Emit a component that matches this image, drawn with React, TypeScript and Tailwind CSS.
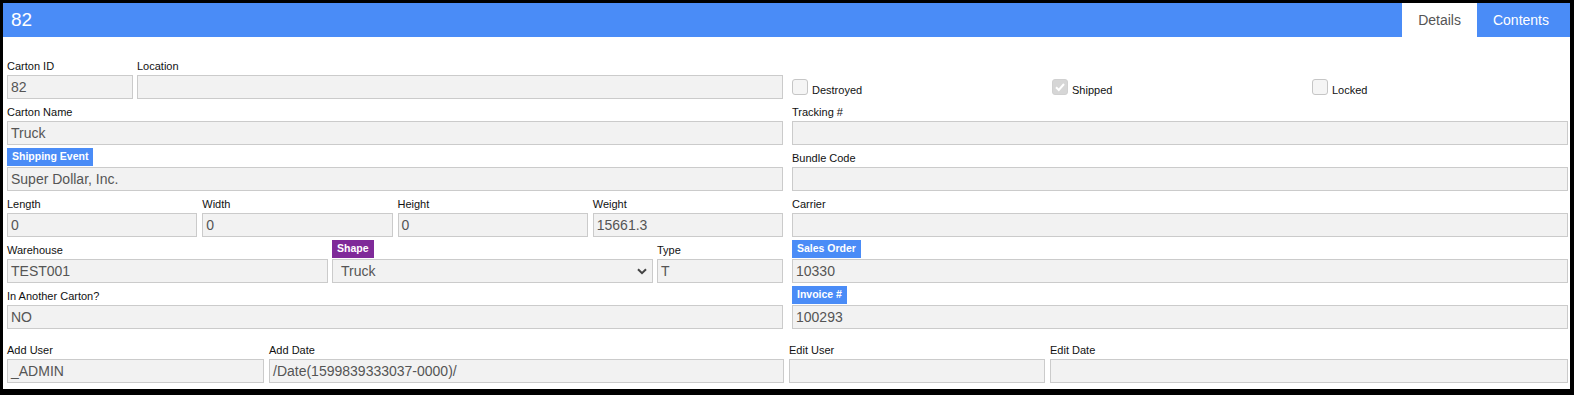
import React from "react";

const font = { fontFamily: '"Liberation Sans", Arial, sans-serif' };

function Label({ text }: { text: string }) {
  return (
    <div className="h-[20px] flex items-end pb-[2px]">
      <span className="text-[11px] leading-[13px] text-[#111]">{text}</span>
    </div>
  );
}

function Badge({ text, purple }: { text: string; purple?: boolean }) {
  return (
    <div className="h-[20px] flex items-end pb-[1px]">
      <span
        className={
          "h-[18px] px-[5px] flex items-center text-[10.5px] font-bold text-white " +
          (purple ? "bg-[#7f2a99]" : "bg-[#4a8cf7]")
        }
      >
        {text}
      </span>
    </div>
  );
}

function Input({ value = "" }: { value?: string }) {
  return (
    <div className="h-[24px] border border-[#cbcbcb] bg-[#f2f2f2] px-[3px] flex items-center text-[14px] text-[#555] whitespace-nowrap overflow-hidden">
      {value}
    </div>
  );
}

function Field({
  label,
  value,
  badge,
}: {
  label: string;
  value?: string;
  badge?: "blue" | "purple";
}) {
  return (
    <div className="flex flex-col min-w-0">
      {badge ? <Badge text={label} purple={badge === "purple"} /> : <Label text={label} />}
      <Input value={value} />
    </div>
  );
}

function Check({ label, checked }: { label: string; checked?: boolean }) {
  return (
    <div className="flex items-end gap-[4px]">
      <div
        className={
          "w-[16px] h-[16px] rounded-[3px] border flex items-center justify-center " +
          (checked ? "bg-[#d6d6d6] border-[#d0d0d0]" : "bg-[#f5f5f5] border-[#c6c6c6]")
        }
      >
        {checked && (
          <svg width="12" height="12" viewBox="0 0 12 12">
            <path d="M2 6.2 L4.8 9 L10 3" fill="none" stroke="#fff" strokeWidth="2" />
          </svg>
        )}
      </div>
      <span className="text-[11px] leading-[11px] text-[#111] mb-[-1px]">{label}</span>
    </div>
  );
}

export default function App() {
  return (
    <div className="w-[1574px] h-[395px] bg-black pt-[3px] pl-[3px]" style={font}>
      <div className="w-[1567px] h-[386px] bg-white flex flex-col">
        <div className="h-[34px] bg-[#4a8cf7] flex items-stretch justify-between pr-[5px]">
          <div className="pl-[8px] flex items-center text-white text-[19px]">82</div>
          <div className="flex items-stretch text-[14px]">
            <div className="bg-white text-[#555] px-[16px] flex items-center">Details</div>
            <div className="text-white px-[16px] flex items-center">Contents</div>
          </div>
        </div>

        <div className="pl-[4px] pr-[2px] pt-[18px] flex flex-col gap-[2px]">
          {/* Row 1 */}
          <div className="grid grid-cols-2 gap-[9px]">
            <div className="grid grid-cols-[126px_1fr] gap-[4px]">
              <Field label="Carton ID" value="82" />
              <Field label="Location" />
            </div>
            <div className="h-[44px] pt-[24px] grid grid-cols-[260px_260px_1fr] items-start">
              <Check label="Destroyed" />
              <Check label="Shipped" checked />
              <Check label="Locked" />
            </div>
          </div>

          {/* Row 2 */}
          <div className="grid grid-cols-2 gap-[9px]">
            <Field label="Carton Name" value="Truck" />
            <Field label="Tracking #" />
          </div>

          {/* Row 3 */}
          <div className="grid grid-cols-2 gap-[9px]">
            <Field label="Shipping Event" value="Super Dollar, Inc." badge="blue" />
            <Field label="Bundle Code" />
          </div>

          {/* Row 4 */}
          <div className="grid grid-cols-2 gap-[9px]">
            <div className="grid grid-cols-4 gap-[5px]">
              <Field label="Length" value="0" />
              <Field label="Width" value="0" />
              <Field label="Height" value="0" />
              <Field label="Weight" value="15661.3" />
            </div>
            <Field label="Carrier" />
          </div>

          {/* Row 5 */}
          <div className="grid grid-cols-2 gap-[9px]">
            <div className="grid grid-cols-[1fr_1fr_126px] gap-[4px]">
              <Field label="Warehouse" value="TEST001" />
              <div className="flex flex-col min-w-0">
                <Badge text="Shape" purple />
                <div className="relative h-[24px] border border-[#cbcbcb] bg-[#f2f2f2] pl-[8px] flex items-center text-[14px] text-[#555]">
                  Truck
                  <svg
                    className="absolute right-[5px] top-[8px]"
                    width="10"
                    height="7"
                    viewBox="0 0 10 7"
                  >
                    <path d="M1 1.2 L5 5.2 L9 1.2" fill="none" stroke="#444" strokeWidth="2" />
                  </svg>
                </div>
              </div>
              <Field label="Type" value="T" />
            </div>
            <Field label="Sales Order" value="10330" badge="blue" />
          </div>

          {/* Row 6 */}
          <div className="grid grid-cols-2 gap-[9px]">
            <Field label="In Another Carton?" value="NO" />
            <Field label="Invoice #" value="100293" badge="blue" />
          </div>

          {/* Row 7 */}
          <div className="mt-[8px] grid grid-cols-[257px_515px_256px_1fr] gap-[5px]">
            <Field label="Add User" value="_ADMIN" />
            <Field label="Add Date" value="/Date(1599839333037-0000)/" />
            <Field label="Edit User" />
            <Field label="Edit Date" />
          </div>
        </div>
      </div>
    </div>
  );
}
